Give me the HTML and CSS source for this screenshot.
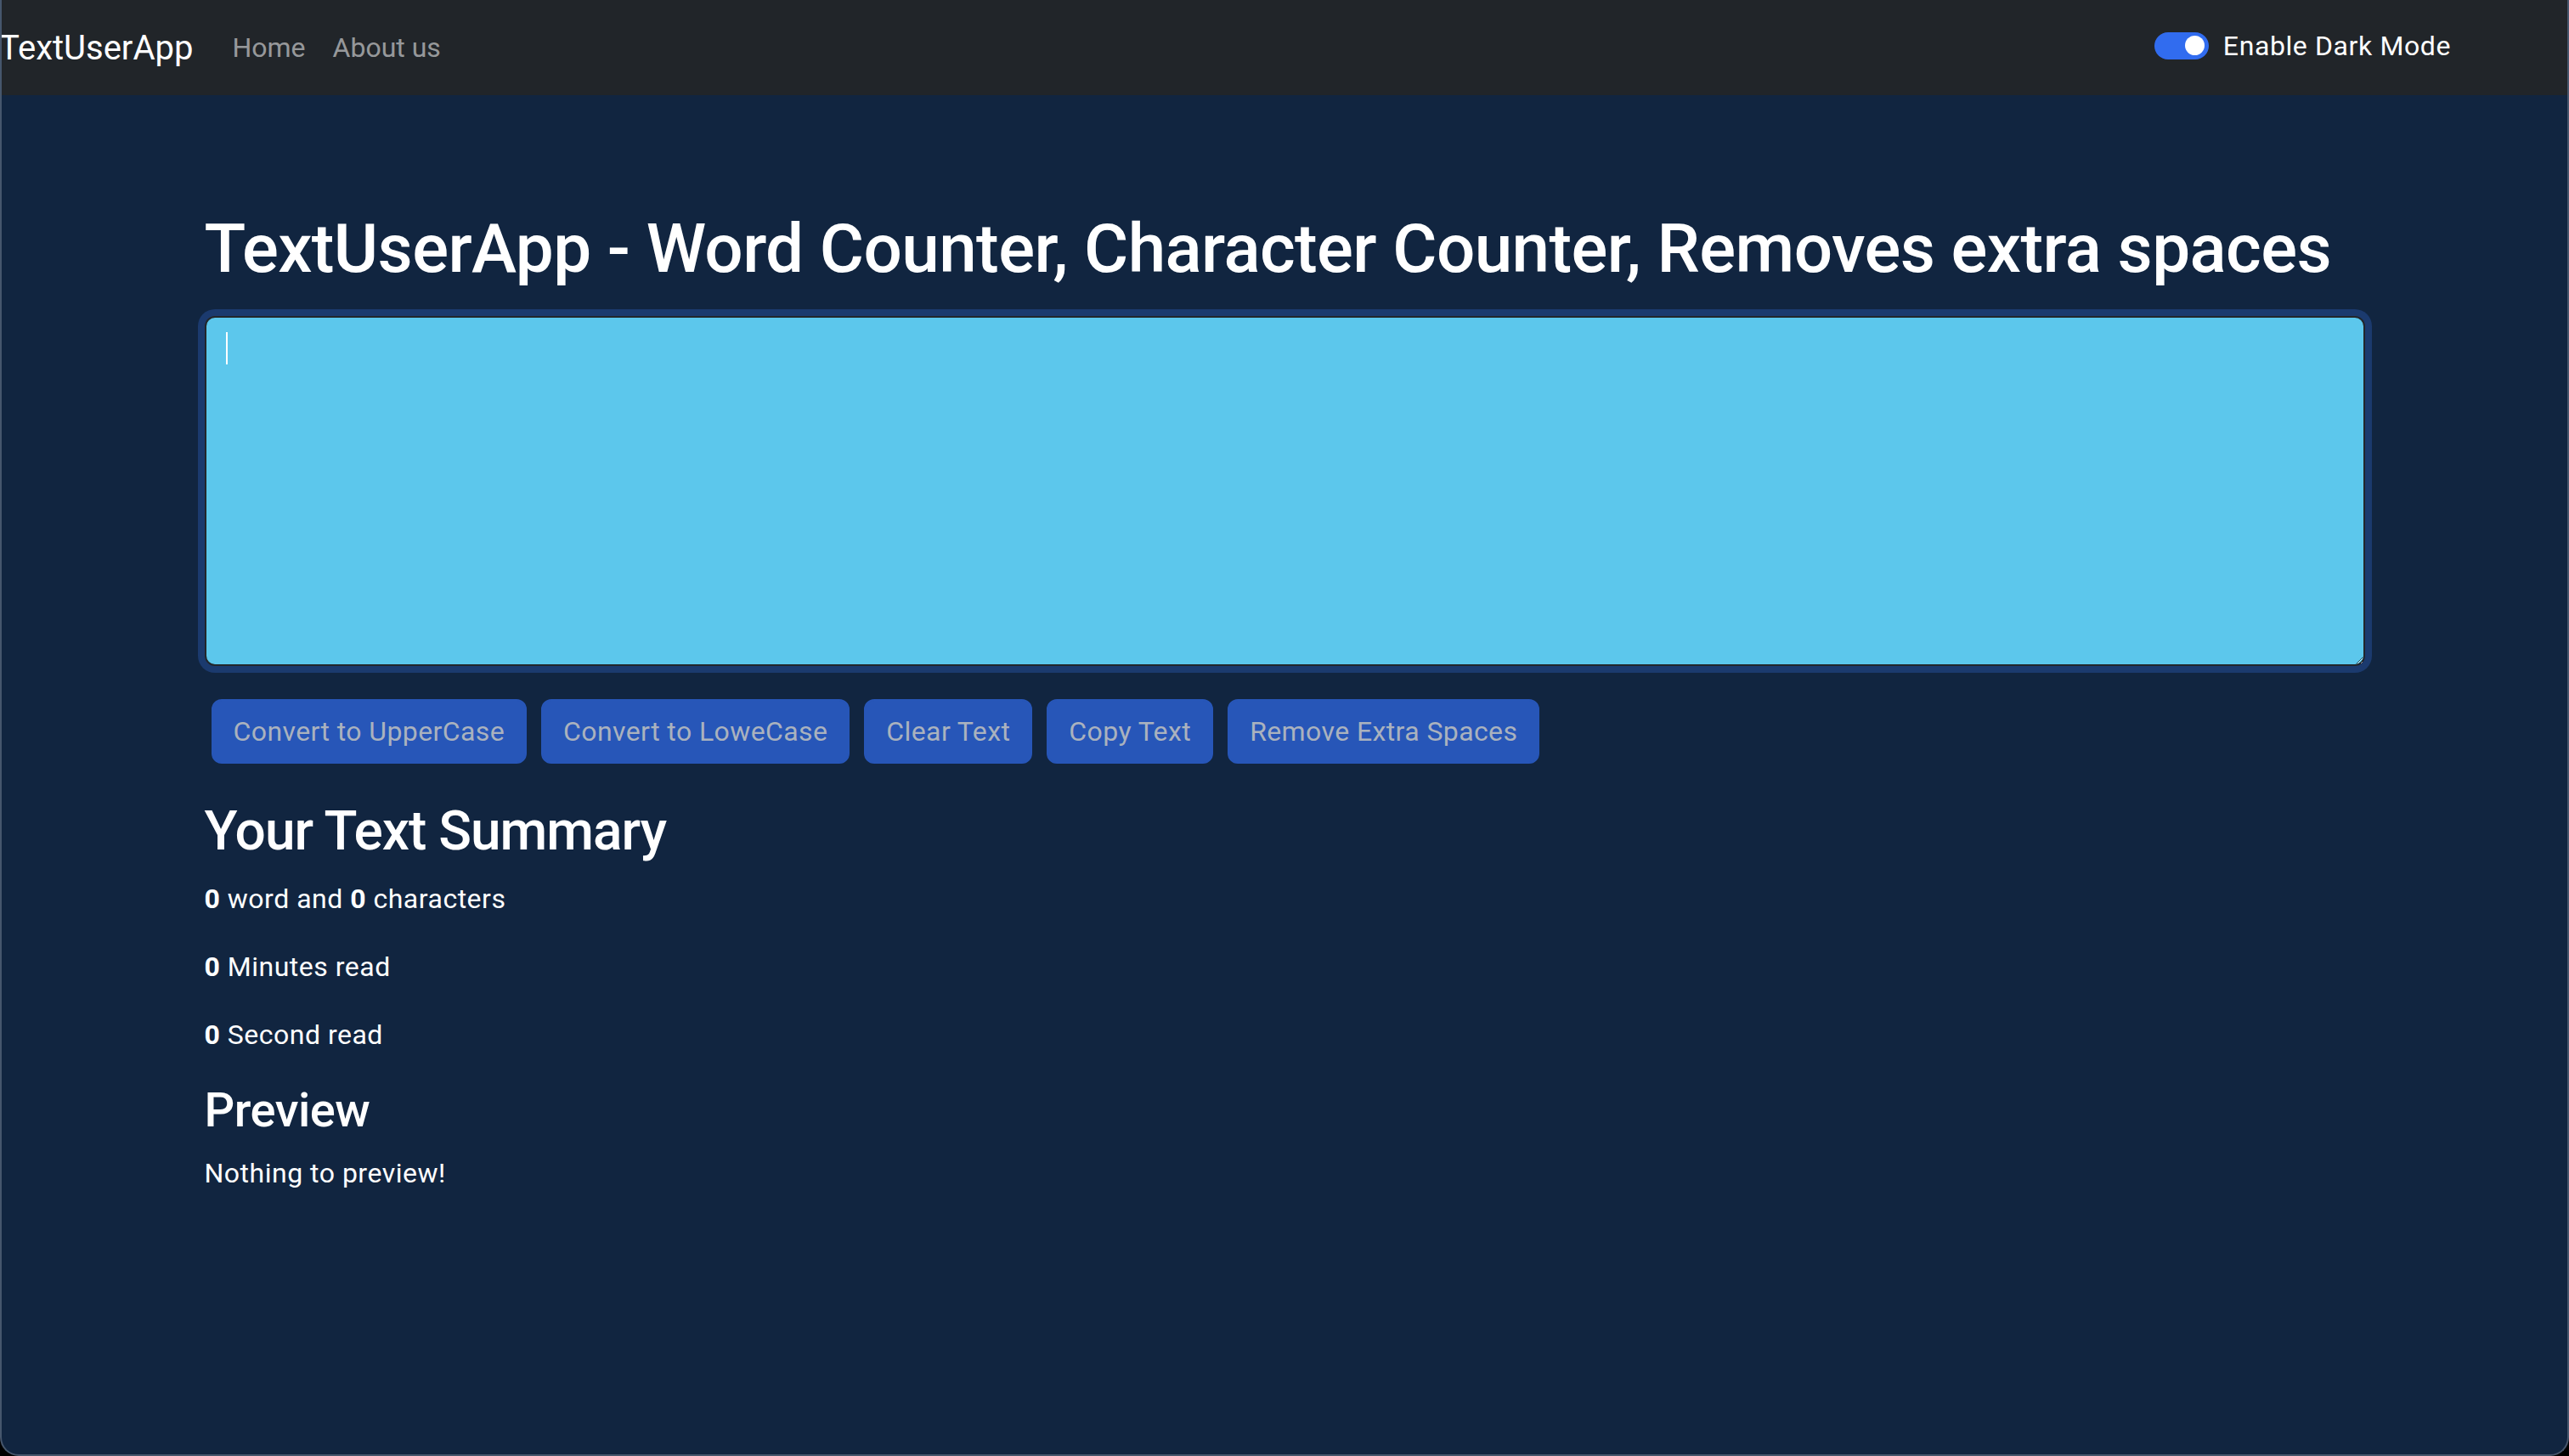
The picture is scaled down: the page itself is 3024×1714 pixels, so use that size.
FILE: index.html
```html
<!DOCTYPE html>
<html lang="en">
<head>
<meta charset="utf-8">
<title>TextUserApp</title>
<link rel="stylesheet" href="styles.css">
</head>
<body>
<div class="window">
  <nav class="navbar">
    <a class="brand" href="#">TextUserApp</a>
    <ul class="nav-links">
      <li><a class="nav-link" href="#">Home</a></li>
      <li><a class="nav-link" href="#">About us</a></li>
    </ul>
    <div class="mode-toggle">
      <span class="switch"><span class="knob"></span></span>
      <span class="switch-label">Enable Dark Mode</span>
    </div>
  </nav>
  <main class="content">
    <h1 class="title">TextUserApp - Word Counter, Character Counter, Removes extra spaces</h1>
    <div class="editor">
      <textarea class="text-box" rows="8"></textarea>
      <span class="caret"></span>
    </div>
    <div class="actions">
      <button class="btn">Convert to UpperCase</button>
      <button class="btn">Convert to LoweCase</button>
      <button class="btn">Clear Text</button>
      <button class="btn">Copy Text</button>
      <button class="btn">Remove Extra Spaces</button>
    </div>
    <section class="summary">
      <h2 class="section-title">Your Text Summary</h2>
      <p class="stat"><b>0</b> word and <b>0</b> characters</p>
      <p class="stat"><b>0</b> Minutes read</p>
      <p class="stat"><b>0</b> Second read</p>
      <h3 class="sub-title">Preview</h3>
      <p class="stat">Nothing to preview!</p>
    </section>
  </main>
</div>
</body>
</html>
```

FILE: styles.css
```css
* { box-sizing: border-box; }
html, body {
  margin: 0;
  padding: 0;
  background: #000;
  font-family: Roboto, "Noto Sans", "Liberation Sans", sans-serif;
}
.window {
  height: 1714px;
  background: #112540;
  border: 2px solid #46566c;
  border-top: none;
  border-radius: 0 0 22px 22px;
  overflow: hidden;
  display: flex;
  flex-direction: column;
}
.navbar {
  height: 112px;
  flex: 0 0 112px;
  background: #212529;
  display: flex;
  align-items: center;
  padding: 0 137px 0 0;
}
.brand {
  font-size: 40px;
  line-height: 60px;
  color: #fff;
  text-decoration: none;
  margin-left: -3px;
  margin-right: 30px;
  margin-top: 2px;
}
.nav-links {
  list-style: none;
  margin: 0;
  padding: 0;
  display: flex;
}
.nav-link {
  display: block;
  padding: 0 16px;
  font-size: 32px;
  line-height: 48px;
  color: rgba(255, 255, 255, 0.55);
  text-decoration: none;
}
.mode-toggle {
  margin-left: auto;
  display: flex;
  align-items: center;
  margin-bottom: 5px;
}
.switch {
  width: 64px;
  height: 32px;
  border-radius: 16px;
  background: #316cef;
  display: flex;
  align-items: center;
  justify-content: flex-end;
  padding-right: 5px;
  margin-right: 17px;
}
.knob {
  width: 23px;
  height: 23px;
  border-radius: 50%;
  background: #fff;
}
.switch-label {
  font-size: 32px;
  line-height: 48px;
  letter-spacing: 0.6px;
  color: #fff;
}
.content {
  width: 2543px;
  margin: 0 auto;
  padding-top: 133px;
  color: #fff;
}
.title {
  margin: 0 0 31px;
  font-size: 80px;
  line-height: 96px;
  font-weight: 500;
  letter-spacing: -0.6px;
  white-space: nowrap;
}
.editor {
  position: relative;
}
.text-box {
  display: block;
  width: 100%;
  height: 412px;
  padding: 12px 24px;
  border: 2px solid #22262b;
  border-radius: 12px;
  background: #5cc7ec;
  box-shadow: 0 0 0 8px #1b3a6e;
  font-family: inherit;
  font-size: 32px;
  line-height: 48px;
  color: #fff;
  outline: none;
  resize: vertical;
}
.caret {
  position: absolute;
  left: 25px;
  top: 19px;
  width: 2px;
  height: 38px;
  background: #fff;
}
.actions {
  display: flex;
  gap: 17px;
  padding-left: 8px;
  margin-top: 39px;
}
.btn {
  font-family: inherit;
  font-size: 32px;
  line-height: 48px;
  letter-spacing: 0.4px;
  padding: 12px 24px;
  border: 2px solid #2756b8;
  border-radius: 12px;
  background: #2756b8;
  color: #aab2be;
}
.summary {
  margin-top: 42px;
}
.section-title {
  margin: 0 0 16px;
  font-size: 64px;
  line-height: 76.8px;
  font-weight: 500;
  letter-spacing: -1px;
}
.sub-title {
  margin: 0 0 16px;
  font-size: 56px;
  line-height: 67.2px;
  font-weight: 500;
  letter-spacing: -0.5px;
}
.stat {
  margin: 0 0 32px;
  font-size: 32px;
  line-height: 48px;
  letter-spacing: 0.5px;
}
.stat b {
  font-weight: 700;
}
```
